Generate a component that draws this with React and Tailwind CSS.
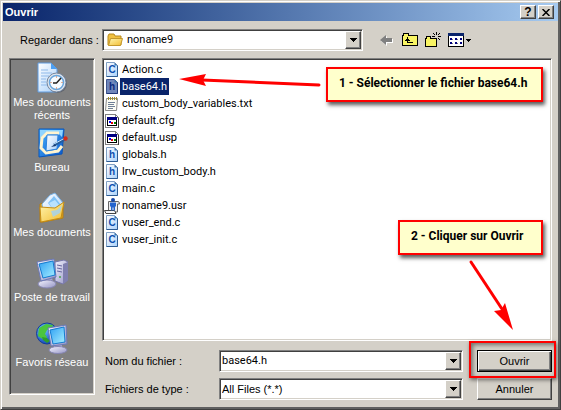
import { useState } from "react";
import clsx from "clsx";

const SUNKEN =
  "border border-t-[#808080] border-l-[#808080] border-r-white border-b-white p-px shadow-[inset_1px_1px_0_#404040,inset_-1px_-1px_0_#d4d0c8]";
const RAISED =
  "border border-t-white border-l-white border-r-[#404040] border-b-[#404040] bg-[#d4d0c8] shadow-[inset_-1px_-1px_0_#808080]";

const FILES = [
  { name: "Action.c", kind: "C" },
  { name: "base64.h", kind: "h" },
  { name: "custom_body_variables.txt", kind: "txt" },
  { name: "default.cfg", kind: "cfg" },
  { name: "default.usp", kind: "cfg" },
  { name: "globals.h", kind: "h" },
  { name: "lrw_custom_body.h", kind: "h" },
  { name: "main.c", kind: "C" },
  { name: "noname9.usr", kind: "usr" },
  { name: "vuser_end.c", kind: "C" },
  { name: "vuser_init.c", kind: "C" },
];

const PLACES = [
  { label: "Mes documents récents", icon: RecentIcon },
  { label: "Bureau", icon: DesktopIcon },
  { label: "Mes documents", icon: DocumentsIcon },
  { label: "Poste de travail", icon: ComputerIcon },
  { label: "Favoris réseau", icon: NetworkIcon },
];

function Gradients() {
  return (
    <svg className="absolute size-0" aria-hidden="true">
      <defs>
        <linearGradient id="paper" x1="0" y1="0" x2="1" y2="1">
          <stop offset="0" stopColor="#ffffff" />
          <stop offset="1" stopColor="#a9d0fa" />
        </linearGradient>
        <linearGradient id="screen" x1="0" y1="0" x2="1" y2="1">
          <stop offset="0" stopColor="#2fa0f4" />
          <stop offset="1" stopColor="#a8f0ff" />
        </linearGradient>
        <linearGradient id="metal" x1="0" y1="0" x2="1" y2="1">
          <stop offset="0" stopColor="#f4f4ff" />
          <stop offset="1" stopColor="#9494c4" />
        </linearGradient>
        <linearGradient id="gold" x1="0" y1="0" x2="1" y2="1">
          <stop offset="0" stopColor="#fff6b0" />
          <stop offset="1" stopColor="#f2bc30" />
        </linearGradient>
        <linearGradient id="blue" x1="0" y1="0" x2="1" y2="1">
          <stop offset="0" stopColor="#49b4ff" />
          <stop offset="1" stopColor="#0a55c8" />
        </linearGradient>
        <radialGradient id="globe" cx="0.35" cy="0.3" r="0.8">
          <stop offset="0" stopColor="#6cc4ff" />
          <stop offset="1" stopColor="#0a37b4" />
        </radialGradient>
      </defs>
    </svg>
  );
}

function RecentIcon() {
  return (
    <svg viewBox="0 0 32 32" className="size-8 shrink-0">
      <path d="M2 1h13l6 6v23H2z" fill="url(#paper)" stroke="#5f9be0" />
      <path d="M15 1v6h6z" fill="#4da0f2" />
      <path d="M5 8h7M5 11h11M5 14h8M5 17h5M5 20h5M5 23h6" stroke="#8fb9ea" />
      <circle cx="21.5" cy="21.5" r="9.5" fill="#49505e" opacity=".55" />
      <circle cx="20.5" cy="20.5" r="9.5" fill="#dfe5ee" stroke="#75859c" />
      <circle cx="20.5" cy="20.5" r="7" fill="#f7fbff" stroke="#69a5dc" strokeWidth="1.5" />
      <path d="M25 16l-4.500 5h-3.500" fill="none" stroke="#222" strokeWidth="1.500" />
      <path d="M20.500 14.500v1M20.500 25.500v1M14.500 20.500h1M25.500 20.500h1" stroke="#d26b39" />
    </svg>
  );
}

function DesktopIcon() {
  return (
    <svg viewBox="0 0 32 32" className="size-8 shrink-0">
      <path d="M3 2h25l-2 25-23 3z" fill="url(#blue)" stroke="#0756bd" />
      <path d="M4 3h23l-1 7-5-5H10L4 11z" fill="#8fd4ff" />
      <path d="M23 6H11L6 11l-1 10 5 5 12-2 4-5" fill="none" stroke="#fff4cf" strokeWidth="3" />
      <path d="M11 8h11l-1 14-11 2z" fill="url(#paper)" stroke="#2c83dd" />
      <path d="M18 18l11-6" stroke="#275d9b" strokeWidth="3" />
      <path d="M18 17l10-5.500" stroke="#c4e6ff" />
      <path d="M15 20l4-3 1 2z" fill="#163b70" />
      <circle cx="29.500" cy="11.500" r="2.200" fill="#d52b18" />
    </svg>
  );
}

function DocumentsIcon() {
  return (
    <svg viewBox="0 0 32 32" className="size-8 shrink-0">
      <path d="M4 12l6-2 3 2 14-1v15L7 30H4z" fill="#e5a91e" stroke="#b47d10" />
      <path d="M6 12l8-9 5-2 9 11-8 12-12 1z" fill="url(#paper)" stroke="#76aee2" />
      <path d="M12 11l6-7 7 9-6 7z" fill="#7fc2f7" />
      <path d="M13 11l6-3 4 5-5 6z" fill="#b9e2ff" />
      <path d="M4 15l15 1 9-6-3 16-20 4z" fill="url(#gold)" stroke="#c58d16" />
      <path d="M15 19l6-1 5-5-2 8-7 4z" fill="#9fd2f7" opacity=".8" />
    </svg>
  );
}

function ComputerIcon() {
  return (
    <svg viewBox="0 0 32 32" className="size-8 shrink-0">
      <path d="M19 5l9-2 4 2v18l-5 4-8-3z" fill="url(#metal)" stroke="#7777aa" />
      <path d="M27 7l5-2v18l-5 4z" fill="#7f7fae" />
      <path d="M21 8l5 1M21 11l5 1M21 14l5 1" stroke="#6868a0" />
      <circle cx="24" cy="20" r="1" fill="#46a34d" />
      <path d="M8 20h8l1 6H8z" fill="#a8a8cf" />
      <ellipse cx="11" cy="27" rx="9" ry="4" fill="url(#metal)" stroke="#8585b3" />
      <path d="M1 5l17-3 2 18-15 4z" fill="url(#metal)" stroke="#6a78b6" />
      <path d="M3 7l14-3 2 14-12 3z" fill="url(#screen)" stroke="#147bd0" />
    </svg>
  );
}

function NetworkIcon() {
  return (
    <svg viewBox="0 0 32 32" className="size-8 shrink-0">
      <circle cx="11" cy="11.500" r="10.500" fill="url(#globe)" stroke="#133c97" />
      <path d="M3 6l7-4 7 1-1 3-5 2-2 4 2 3-3 3-6-4z" fill="#4bc53e" />
      <path d="M6 15l5 1 3 3-3 2-4-3z" fill="#2f9c2c" />
      <path d="M18 22h8v5h-8z" fill="#a8a8cf" />
      <ellipse cx="22" cy="28" rx="9" ry="3.500" fill="url(#metal)" stroke="#8585b3" />
      <path d="M12 6l18-3 1 19-16 2z" fill="url(#metal)" stroke="#6a78b6" />
      <path d="M14 8l14-3 1 15-12 2z" fill="url(#screen)" stroke="#147bd0" />
    </svg>
  );
}

function FolderIcon() {
  return (
    <svg viewBox="0 0 16 16" className="size-4 shrink-0">
      <path d="M1 4l1-2h5l1 2h6v9H1z" fill="#f0c040" stroke="#b98a1c" />
      <path d="M3.500 6.500h12l-2 7h-12z" fill="url(#gold)" stroke="#c4982c" />
    </svg>
  );
}

function FileIcon({ kind, selected }) {
  if (kind === "txt") {
    return (
      <svg viewBox="0 0 16 16" className="size-4 shrink-0">
        <path d="M2.500 2.500h11l-1 12h-11z" fill="#fbfbf4" stroke="#8a8a8a" />
        <path d="M4 6.500h7M4 8.500h6M4 10.500h7M4 12.500h5" stroke="#6e7f96" />
        <path d="M4.500 1v3M6.500 1v3M8.500 1v3M10.500 1v3M12.500 1v3" stroke="#a08e2c" />
      </svg>
    );
  }
  if (kind === "cfg") {
    return (
      <svg viewBox="0 0 16 16" className="size-4 shrink-0" shapeRendering="crispEdges">
        <path d="M1.500 1.500h10l3 3v10h-13z" fill="#fff" stroke="#808080" />
        <path d="M14.500 4v11" fill="none" stroke="#404040" />
        <path d="M11.500 1.500v3h3" fill="none" stroke="#808080" />
        <rect x="3.500" y="4.500" width="9" height="8" fill="#fff" stroke="#000" />
        <path d="M3 4h10v3H3z" fill="#000080" />
        <path d="M5 8h2v2H5z" fill="#0000ff" />
        <path d="M7 9h2v2H7z" fill="#e00000" />
        <path d="M10 9h2v2h-2z" fill="#008000" />
      </svg>
    );
  }
  if (kind === "usr") {
    return (
      <svg viewBox="0 0 16 16" className="size-4 shrink-0">
        <path d="M4.500 3.500h9.500q1.500 0 1.500 2.500h-2v8h-9z" fill="#ededed" stroke="#666" />
        <path d="M.5 12.500h10l1.500 3H2z" fill="#f7f7f7" stroke="#444" />
        <circle cx="9" cy="2" r="2" fill="#1747a8" />
        <path d="M6 4.500h6v4h-1v4H9.500v-3h-1v3H7v-4H6z" fill="#2464ce" />
      </svg>
    );
  }
  return (
    <svg viewBox="0 0 16 16" className="size-4 shrink-0">
      <path
        d="M2.500 .5h8l3 3v11h-11z"
        fill={selected ? "#6f86ba" : "url(#paper)"}
        stroke={selected ? "#3f5590" : "#7f9fc4"}
      />
      <path d="M13.500 3.500v11h-11" fill="none" stroke={selected ? "#203877" : "#2d5c94"} />
      <path d="M10.500 .5v3h3z" fill="#3c70a8" />
      <text
        x="8"
        y="11"
        textAnchor="middle"
        fill={selected ? "#0a2a80" : "#0e4fae"}
        className="font-['Liberation_Sans',sans-serif] text-[10px] font-bold"
      >
        {kind}
      </text>
    </svg>
  );
}

function DropArrow() {
  return (
    <svg viewBox="0 0 7 4" className="h-1 w-[7px]" shapeRendering="crispEdges">
      <path d="M0 0h7v1H6v1H5v1H4v1H3V3H2V2H1V1H0z" />
    </svg>
  );
}

function BackIcon() {
  return (
    <svg viewBox="0 0 16 16" className="size-4">
      <path d="M2 9l6-5v3h6v4H8v3z" fill="#fff" />
      <path d="M1 8l6-5v3h6v4H7v3z" fill="#808080" />
    </svg>
  );
}

function UpIcon() {
  return (
    <svg viewBox="0 0 16 16" className="size-4" shapeRendering="crispEdges">
      <path d="M.5 3.500h1v-2h5v2h9v10H.5z" fill="#f8f464" stroke="#000" />
      <path d="M5.500 5v6M4 7.500h3M3 8.500h5M5 10.500h6" stroke="#000" />
    </svg>
  );
}

function NewFolderIcon() {
  return (
    <svg viewBox="0 0 16 16" className="size-4" shapeRendering="crispEdges">
      <path d="M.5 6.500h1v-2h4v2h6v8H.5z" fill="#f8f464" stroke="#000" />
      <path d="M11.500 0v3M11.500 6v3M7 4.500h3M13 4.500h3" stroke="#000" />
      <path d="M8 1h1v1H8zM9 2h1v1H9zM14 1h1v1h-1zM13 2h1v1h-1zM13 6h1v1h-1zM14 7h1v1h-1zM9 6h1v1H9z" />
    </svg>
  );
}

function ViewIcon() {
  return (
    <svg viewBox="0 0 16 16" className="size-4" shapeRendering="crispEdges">
      <path d="M.5 1.500h15v13H.5z" fill="#fff" stroke="#000" />
      <path d="M0 1h16v3H0z" fill="#0a246a" />
      <path d="M2 6h2v2H2zM7 6h2v2H7zM12 6h2v2h-2zM2 10h2v2H2zM7 10h2v2H7zM12 10h2v2h-2z" fill="#00007e" />
      <path d="M4 7.500h1M9 7.500h1M4 11.500h1M9 11.500h1" stroke="#777" />
    </svg>
  );
}

function TitleButton({ label, children }) {
  return (
    <button type="button" aria-label={label} className={clsx(RAISED, "flex h-3.5 w-4 items-center justify-center")}>
      {children}
    </button>
  );
}

function ComboBox({ children, className }) {
  return (
    <div className={clsx(SUNKEN, "relative flex h-[22px] items-center bg-white", className)}>
      {children}
      <span className={clsx(RAISED, "pointer-events-none absolute inset-y-px right-px flex w-4 items-center justify-center")}>
        <DropArrow />
      </span>
    </div>
  );
}

function Callout({ children, className }) {
  return (
    <div
      className={clsx(
        "absolute h-[35px] border-2 border-[#f00] bg-[#ffffcc] pt-1.5 pl-[11px] font-[Roboto,sans-serif] text-xs leading-4 font-bold whitespace-nowrap shadow-[2px_3px_4px_rgba(0,0,0,0.65)]",
        className
      )}
    >
      {children}
    </div>
  );
}

export default function App() {
  const [selected, setSelected] = useState("base64.h");
  const [fileName, setFileName] = useState("base64.h");

  const pick = (name) => {
    setSelected(name);
    setFileName(name);
  };

  return (
    <div className="relative flex min-h-screen w-full flex-col border border-t-[#d4d0c8] border-l-[#d4d0c8] border-r-[#404040] border-b-[#404040] bg-[#d4d0c8] p-0.5 font-['Liberation_Sans',Arial,sans-serif] text-[11px] text-black shadow-[inset_1px_1px_0_#fff,inset_-2px_-2px_0_#606060]">
      <Gradients />

      <header className="flex h-[18px] items-center gap-0.5 bg-linear-to-r from-[#0a246a] to-[#a6caf0] pr-1 pl-0.5">
        <h1 className="flex-1 leading-4 font-bold text-white">Ouvrir</h1>
        <TitleButton label="Aide">
          <span className="text-xs leading-3 font-bold">?</span>
        </TitleButton>
        <TitleButton label="Fermer">
          <svg viewBox="0 0 8 7" className="h-[7px] w-2">
            <path d="M.5 0l7 7M7.500 0l-7 7" stroke="#000" strokeWidth="1.500" />
          </svg>
        </TitleButton>
      </header>

      <div className="flex items-center pt-2 pb-[7px] pl-[17px]">
        <label htmlFor="folder" className="w-[82px] whitespace-nowrap">
          Regarder dans :
        </label>
        <ComboBox className="w-[261px] pl-1">
          <FolderIcon />
          <select id="folder" className="h-4 flex-1 appearance-none pl-1 font-[Roboto,sans-serif] text-[11px] leading-4 outline-none">
            <option>noname9</option>
          </select>
        </ComboBox>
        <div className="flex items-center gap-[7px] pl-4">
          <button type="button" aria-label="Retour">
            <BackIcon />
          </button>
          <button type="button" aria-label="Dossier parent">
            <UpIcon />
          </button>
          <button type="button" aria-label="Nouveau dossier">
            <NewFolderIcon />
          </button>
          <button type="button" aria-label="Affichage" className="flex items-center gap-0.5">
            <ViewIcon />
            <svg viewBox="0 0 5 3" className="h-[3px] w-[5px]" shapeRendering="crispEdges">
              <path d="M0 0h5v1H4v1H3v1H2V2H1V1H0z" />
            </svg>
          </button>
        </div>
      </div>

      <div className="flex flex-1 gap-[7px] pr-1.5 pl-1.5">
        <nav className={clsx(SUNKEN, "mb-3 w-[86px] bg-[#808080] pt-0.5")}>
          {PLACES.map(({ label, icon: Icon }) => (
            <button
              key={label}
              type="button"
              className="flex h-[65px] w-full flex-col items-center gap-0.5 pt-px leading-[13px] text-white"
            >
              <Icon />
              <span>{label}</span>
            </button>
          ))}
        </nav>

        <div className="flex flex-1 flex-col">
          <ul className={clsx(SUNKEN, "min-h-[283px] bg-white pt-0.5")}>
            {FILES.map(({ name, kind }) => (
              <li key={name}>
                <button
                  type="button"
                  onClick={() => pick(name)}
                  className="flex h-[17px] items-center font-[Roboto,sans-serif] text-[11px] leading-[17px]"
                >
                  <FileIcon kind={kind} selected={name === selected} />
                  <span className={clsx("px-0.5", name === selected && "bg-[#0a246a] text-white")}>{name}</span>
                </button>
              </li>
            ))}
          </ul>

          <div className="flex gap-3.5 pt-[9px] pl-[3px]">
            <div className="grid flex-1 grid-cols-[114px_1fr] items-center gap-y-1.5">
              <label htmlFor="filename">Nom du fichier :</label>
              <ComboBox>
                <input
                  id="filename"
                  value={fileName}
                  onChange={(e) => setFileName(e.target.value)}
                  className="h-4 w-full pl-px font-[Roboto,sans-serif] text-[11px] leading-4 outline-none"
                />
              </ComboBox>
              <label htmlFor="filetype">Fichiers de type :</label>
              <ComboBox>
                <select id="filetype" className="h-4 w-full appearance-none pl-px leading-4 outline-none">
                  <option>All Files (*.*)</option>
                </select>
              </ComboBox>
            </div>
            <div className="flex w-[75px] flex-col gap-1.5">
              <div className="relative">
                <button
                  type="button"
                  className="h-[22px] w-full border border-black bg-[#d4d0c8] shadow-[inset_1px_1px_0_#fff,inset_-1px_-1px_0_#404040,inset_-2px_-2px_0_#808080]"
                >
                  Ouvrir
                </button>
                <div className="pointer-events-none absolute -top-[9px] -right-1 -bottom-1.5 -left-2 z-10 border-2 border-[#f00] shadow-[1px_2px_4px_rgba(0,0,0,0.5),inset_2px_2px_4px_rgba(0,0,0,0.45)]" />
              </div>
              <button type="button" className={clsx(RAISED, "h-[22px] w-full")}>
                Annuler
              </button>
            </div>
          </div>
        </div>
      </div>

      {/* step annotations laid over the dialog */}
      <Callout className="top-[66px] right-[17px] w-[217px]">1 - Sélectionner le fichier base64.h</Callout>
      <Callout className="top-[219px] right-[17px] w-[145px]">2 - Cliquer sur Ouvrir</Callout>
      <svg viewBox="0 0 144 16" className="pointer-events-none absolute top-[72px] right-[238px] h-4 w-36">
        <path d="M24 7l117 5" stroke="#f00" strokeWidth="3" strokeLinecap="round" />
        <path d="M1 6l27-5-3 6 3 6z" fill="#f00" />
      </svg>
      <svg viewBox="0 0 48 72" className="pointer-events-none absolute top-[258px] right-[45px] h-[72px] w-12">
        <path d="M4 3l31 47" stroke="#f00" strokeWidth="3" strokeLinecap="round" />
        <path d="M46 71L27 52l7-1 4-7z" fill="#f00" />
      </svg>
    </div>
  );
}
